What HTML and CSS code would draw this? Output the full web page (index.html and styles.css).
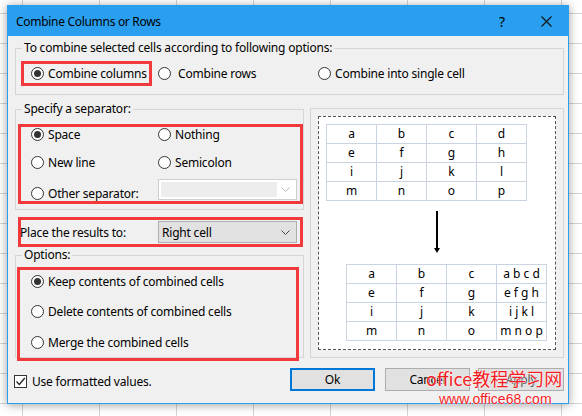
FILE: index.html
```html
<!DOCTYPE html>
<html>
<head>
<meta charset="utf-8">
<link rel="stylesheet" href="styles.css">
</head>
<body>
<div class="dialog">
  <div class="titlebar">
    <span class="title">Combine Columns or Rows</span>
    <span class="help">?</span>
    <svg class="close" width="11" height="11" viewBox="0 0 11 11"><path d="M0.5 0.5 L10.5 10.5 M10.5 0.5 L0.5 10.5" stroke="#111" stroke-width="1.1" fill="none"/></svg>
  </div>
  <div class="content">
    <fieldset class="group g1">
      <legend>To combine selected cells according to following options:</legend>
      <div class="mode-row">
        <div class="hl hl-mode"><label class="radio"><span class="dot on"></span>Combine columns</label></div>
        <label class="radio r-rows"><span class="dot"></span>Combine rows</label>
        <label class="radio"><span class="dot"></span>Combine into single cell</label>
      </div>
    </fieldset>

    <div class="columns">
      <div class="left">
        <fieldset class="group g2">
          <legend>Specify a separator:</legend>
          <div class="hl hl-sep">
            <label class="radio"><span class="dot on"></span>Space</label>
            <label class="radio"><span class="dot"></span>Nothing</label>
            <label class="radio"><span class="dot"></span>New line</label>
            <label class="radio"><span class="dot"></span>Semicolon</label>
            <label class="radio"><span class="dot"></span>Other separator:</label>
            <div class="select disabled"><span class="field"></span><svg width="9" height="5" viewBox="0 0 9 5"><path d="M0.5 0.5 L4.5 4.5 L8.5 0.5" stroke="#b8b8b8" fill="none"/></svg></div>
          </div>
        </fieldset>

        <div class="hl hl-place">
          <span class="place-label">Place the results to:</span>
          <div class="select"><span class="value">Right cell</span><svg width="9" height="5" viewBox="0 0 9 5"><path d="M0.5 0.5 L4.5 4.5 L8.5 0.5" stroke="#444" fill="none"/></svg></div>
        </div>

        <fieldset class="group g3">
          <legend>Options:</legend>
          <div class="hl hl-opt">
            <label class="radio"><span class="dot on"></span>Keep contents of combined cells</label>
            <label class="radio"><span class="dot"></span>Delete contents of combined cells</label>
            <label class="radio"><span class="dot"></span>Merge the combined cells</label>
          </div>
        </fieldset>
      </div>

      <div class="preview">
        <div class="canvas">
          <div class="tbl t1">
            <span>a</span><span>b</span><span>c</span><span>d</span>
            <span>e</span><span>f</span><span>g</span><span>h</span>
            <span>i</span><span>j</span><span>k</span><span>l</span>
            <span>m</span><span>n</span><span>o</span><span>p</span>
          </div>
          <svg class="arrow" width="10" height="42" viewBox="0 0 10 42"><path d="M5 0 V38" stroke="#000" stroke-width="2"/><path d="M2 37 L8 37 L5 42 Z" fill="#000"/></svg>
          <div class="tbl t2">
            <span>a</span><span>b</span><span>c</span><span>a b c d</span>
            <span>e</span><span>f</span><span>g</span><span>e f g h</span>
            <span>i</span><span>j</span><span>k</span><span>i j k l</span>
            <span>m</span><span>n</span><span>o</span><span>m n o p</span>
          </div>
        </div>
      </div>
    </div>

    <div class="footer">
      <label class="check"><span class="box"><svg width="11" height="11" viewBox="0 0 11 11"><path d="M1.5 5.5 L4.3 8.5 L9.8 2" stroke="#222" stroke-width="1.3" fill="none"/></svg></span>Use formatted values.</label>
      <div class="buttons">
        <button class="btn primary">Ok</button>
        <button class="btn">Cancel</button>
        <button class="btn wide">Apply</button>
      </div>
    </div>
  </div>
</div>
<div class="watermark">
  <div class="wm1">office教程学习网</div>
  <div class="wm2">www.office68.com</div>
</div>
</body>
</html>
```

FILE: styles.css
```css
* { box-sizing: border-box; }
html, body { margin: 0; padding: 0; }
body {
  width: 582px;
  height: 416px;
  overflow: hidden;
  position: relative;
  background-color: #fff;
  background-image:
    linear-gradient(to right, #d4d4d4 1px, transparent 1px),
    linear-gradient(to bottom, #d4d4d4 1px, transparent 1px);
  background-size: 77px 100%, 100% 30px;
  background-position: 22px 0, 0 13px;
  font-family: "Noto Sans", "Open Sans", sans-serif;
  font-size: 12px;
  letter-spacing: -0.2px;
  color: #000;
}
.dialog {
  margin: 5px 0 0 7px;
  width: 562px;
  border: 1px solid #2a9ff0;
  background: #f0f0f0;
  box-shadow: 0 1px 9px rgba(0, 0, 0, 0.38);
}
.titlebar {
  height: 30px;
  background: #2a9ff0;
  display: flex;
  align-items: center;
  padding-left: 8px;
}
.title { flex: 1; letter-spacing: -0.3px; }
.help { font-size: 14px; letter-spacing: 0; margin-right: 36px; }
.close { margin-right: 16px; }

.content { padding: 0 4px 0 7px; }

.group {
  margin: 0;
  padding: 0;
  min-width: 0;
  border: 1px solid #d5d5d5;
}
.group legend {
  margin-left: 6px;
  padding: 0 2px;
  line-height: 16px;
}
.group.g1 { margin-top: 4px; }
.mode-row {
  display: flex;
  align-items: center;
  padding: 5px 0 8px 5px;
}
.hl { border: 3px solid #f23a3d; }
.radio { display: flex; align-items: center; gap: 4px; white-space: nowrap; }
.dot {
  width: 13px;
  height: 13px;
  border: 1px solid #333;
  border-radius: 50%;
  background: #fff;
  display: flex;
  align-items: center;
  justify-content: center;
  flex: none;
}
.dot.on::after {
  content: "";
  width: 7px;
  height: 7px;
  border-radius: 50%;
  background: #333;
}
.hl-mode {
  width: 131px;
  height: 25px;
  padding-left: 7px;
  display: flex;
  align-items: center;
}
.r-rows { margin-left: 6px; width: 160px; gap: 7px; flex: none; }

.columns { display: flex; gap: 6px; }
.left { width: 289px; }
.group.g2 { margin-top: 6px; padding-bottom: 5px; }
.hl-sep {
  margin: 7px 0 0 2px;
  width: 285px;
  height: 80px;
  padding-left: 10px;
  display: grid;
  grid-template-columns: 127px 1fr;
  grid-template-rows: 14px 14px 20px;
  row-gap: 14px;
  align-items: center;
}
.select {
  width: 139px;
  height: 22px;
  border: 1px solid #adadad;
  background: #e1e1e1;
  display: flex;
  align-items: center;
  padding: 0 6px 0 3px;
}
.select svg { margin-left: auto; flex: none; }
.select.disabled {
  height: 21px;
  margin-top: -4px;
  border-color: #cfcfcf;
  background: #fff;
  padding: 2px 6px 2px 2px;
  align-self: start;
}
.select.disabled .field {
  width: 116px;
  height: 100%;
  background: #ededed;
}
.hl-place {
  margin: 7px 0 0 3px;
  width: 285px;
  height: 30px;
  display: flex;
  align-items: center;
  justify-content: space-between;
  padding-right: 3px;
}
.place-label { margin-left: -1px; }
.hl-place .select { height: 22px; }
.hl-opt {
  margin: 4px 0 -4px 1px;
  width: 282px;
  height: 94px;
  padding: 0 0 0 11px;
  display: flex;
  flex-direction: column;
  gap: 8px;
}
.hl-opt .radio { height: 22px; }
.hl-opt .radio:last-child { margin-top: 1px; }

.preview {
  margin-top: 13px;
  width: 254px;
  height: 250px;
  border: 1px solid #d5d5d5;
  padding: 7px;
}
.canvas {
  width: 238px;
  height: 234px;
  border: 1px dashed #555;
  background: #fff;
  padding: 7px;
  display: flex;
  flex-direction: column;
  align-items: flex-start;
}
.tbl {
  display: grid;
  grid-template-columns: repeat(4, 50px);
  grid-auto-rows: 19px;
  border-top: 1px solid #cbd4e3;
  border-left: 1px solid #cbd4e3;
  letter-spacing: 0;
}
.tbl span {
  border-right: 1px solid #cbd4e3;
  border-bottom: 1px solid #cbd4e3;
  display: flex;
  align-items: center;
  justify-content: center;
  line-height: 1;
}
.arrow { margin: 10px 0 0 106px; display: block; }
.t2 { margin: 11px 0 0 20px; }

.footer {
  display: flex;
  align-items: center;
  padding: 10px 0 12px 0;
}
.check { display: flex; align-items: center; gap: 5px; margin: 4px 0 0 -1px; }
.box {
  width: 13px;
  height: 13px;
  border: 1px solid #333;
  background: #fff;
  display: flex;
  align-items: center;
  justify-content: center;
}
.buttons { margin-left: auto; display: flex; }
.btn {
  width: 85px;
  height: 23px;
  border: 1px solid #adadad;
  background: #e1e1e1;
  font-family: "Noto Sans", "Open Sans", sans-serif;
  font-size: 12px;
  letter-spacing: -0.2px;
  color: #000;
  padding: 0;
  margin-left: 10px;
}
.btn.primary { border: 2px solid #0078d7; margin-left: 0; }
.btn.wide { width: 86px; margin-left: 8px; color: #555; }

.watermark {
  position: absolute;
  left: 426px;
  top: 367px;
  color: #f21c24;
  text-shadow: 0 0 2px #fff, 0 0 1px #fff;
  letter-spacing: 0;
}
.wm1 {
  font-family: "Noto Sans CJK SC", sans-serif;
  font-size: 18px;
  line-height: 22px;
  white-space: nowrap;
}
.wm2 {
  font-family: "Liberation Sans", sans-serif;
  font-size: 14px;
  line-height: 16px;
  margin: 2px 0 0 13px;
}
```
